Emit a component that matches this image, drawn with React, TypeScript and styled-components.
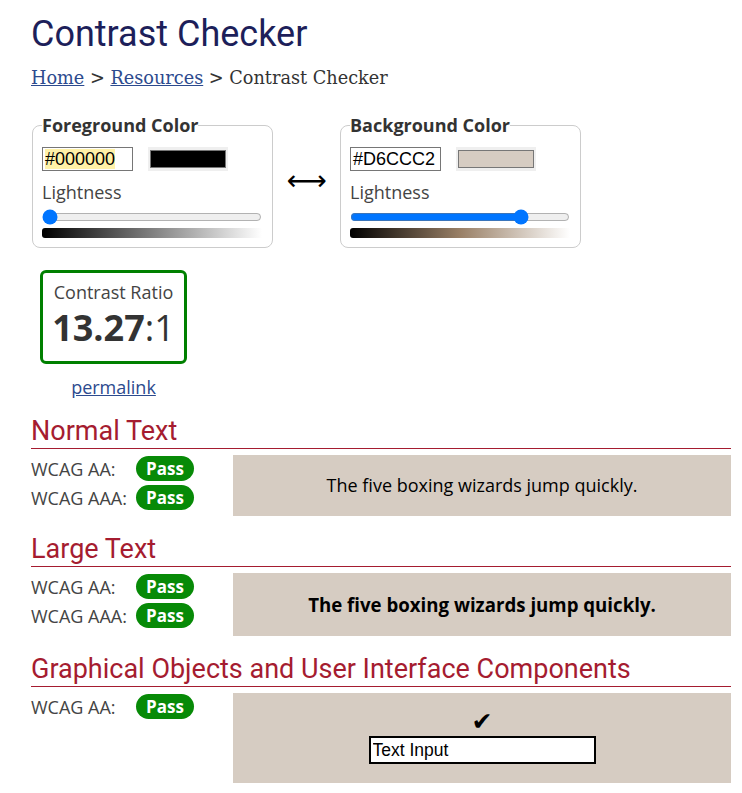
import React from "react";
import styled, { createGlobalStyle } from "styled-components";

const Global = createGlobalStyle`
  html, body { margin: 0; padding: 0; background: #fff; }
  body { font-family: "Open Sans", sans-serif; color: #333; }
  * { box-sizing: border-box; }
`;

const Page = styled.main`
  width: 742px;
  padding: 14px 11px 0 31px;
`;

const Title = styled.h1`
  margin: 0;
  font-family: Roboto, sans-serif;
  font-weight: 400;
  font-size: 36px;
  line-height: 40px;
  color: #1d1f5a;
`;

const Crumbs = styled.nav`
  margin-top: 12px;
  font-family: "DejaVu Serif", serif;
  font-size: 17.7px;
  line-height: 24px;
  color: #333;
  a { color: #2c4a8e; text-decoration: underline; }
`;

const ColorRow = styled.div`
  display: flex;
  align-items: center;
  margin-top: 24px;
  padding-left: 1px;
`;

const Fieldset = styled.fieldset`
  width: 241px;
  margin: 0;
  min-width: 0;
  border: 1px solid #ccc;
  border-radius: 8px;
  padding: 11px 10px 9px 9px;
`;

const Legend = styled.legend`
  padding: 0;
  font-weight: 700;
  font-size: 18px;
  line-height: 22px;
  color: #333;
`;

const InputRow = styled.div`
  display: flex;
  align-items: center;
  gap: 15px;
`;

const HexField = styled.div`
  width: 91px;
  height: 24px;
  border: 1px solid #767676;
  padding: 0 2px;
  font-family: "Liberation Sans", Arial, sans-serif;
  font-size: 18px;
  line-height: 22px;
  color: #000;
  background: #fff;
`;

const Mark = styled.span<{ $on: boolean }>`
  background: ${(p) => (p.$on ? "#fff2a8" : "transparent")};
`;

const Swatch = styled.div`
  width: 80px;
  height: 24px;
  padding: 3px 2px;
  background: #efefef;
`;

const SwatchFill = styled.div<{ $c: string }>`
  width: 100%;
  height: 100%;
  border: 1px solid #777;
  background: ${(p) => p.$c};
`;

const Label = styled.div`
  margin-top: 9px;
  font-size: 18px;
  line-height: 24px;
  color: #444;
`;

const Range = styled.input`
  display: block;
  width: 100%;
  height: 16px;
  margin: 5px 0 0;
`;

const GradientBar = styled.div<{ $g: string }>`
  height: 10px;
  margin-top: 3px;
  border-radius: 3px 0 0 3px;
  background: ${(p) => p.$g};
`;

const Swap = styled.div`
  width: 67px;
  text-align: center;
  font-family: "DejaVu Sans", sans-serif;
  font-size: 28px;
  line-height: 30px;
  color: #000;
`;

const RatioWrap = styled.div`
  width: 147px;
  margin: 22px 0 0 9px;
  display: flex;
  flex-direction: column;
  align-items: center;
`;

const RatioBox = styled.div`
  width: 147px;
  height: 94px;
  border: 3px solid #008000;
  border-radius: 6px;
  padding-top: 8px;
  display: flex;
  flex-direction: column;
  align-items: center;
`;

const RatioLabel = styled.div`
  font-size: 18px;
  line-height: 23px;
  color: #444;
`;

const RatioValue = styled.div`
  margin-top: 2px;
  font-size: 36px;
  line-height: 44px;
  color: #333;
  b { font-weight: 700; }
`;

const Permalink = styled.a`
  margin-top: 11px;
  font-size: 18px;
  line-height: 24px;
  color: #2c4a8e;
  text-decoration: underline;
`;

const Section = styled.section<{ $first?: boolean }>`
  margin-top: ${(p) => (p.$first ? "17px" : "18px")};
`;

const SectionTitle = styled.h2`
  margin: 0;
  padding-bottom: 2px;
  border-bottom: 1px solid #a51c30;
  font-family: Roboto, sans-serif;
  font-weight: 400;
  font-size: 27px;
  line-height: 30px;
  color: #a51c30;
`;

const SectionBody = styled.div`
  display: grid;
  grid-template-columns: 202px 1fr;
  margin-top: 6px;
`;

const Results = styled.div`
  display: flex;
  flex-direction: column;
  gap: 4px;
  padding-top: 1px;
`;

const ResultRow = styled.div`
  display: flex;
  align-items: center;
  height: 25px;
`;

const Level = styled.span`
  width: 105px;
  font-size: 18px;
  color: #444;
`;

const Badge = styled.span`
  height: 25px;
  padding: 0 10px;
  border-radius: 13px;
  background: #078a07;
  color: #fff;
  font-weight: 700;
  font-size: 17px;
  line-height: 25px;
`;

const Sample = styled.div<{ $large?: boolean }>`
  background: #d6ccc2;
  padding: 19px;
  text-align: center;
  color: #000;
  font-size: ${(p) => (p.$large ? "18.67px" : "18px")};
  font-weight: ${(p) => (p.$large ? 700 : 400)};
  line-height: ${(p) => (p.$large ? "25px" : "23px")};
`;

const UiSample = styled.div`
  background: #d6ccc2;
  padding: 12px 0 19px;
  display: flex;
  flex-direction: column;
  align-items: center;
`;

const Check = styled.div`
  font-family: "DejaVu Sans", sans-serif;
  font-size: 25px;
  line-height: 30px;
  color: #000;
  margin-bottom: 1px;
  padding-top: 2px;
  height: 30px;
`;

const DemoInput = styled.input`
  width: 227px;
  height: 28px;
  border: 2px solid #000;
  background: #fff;
  padding: 0 2px;
  font-family: "Liberation Sans", Arial, sans-serif;
  font-size: 17.5px;
  color: #000;
  outline: none;
`;

type ColorInfo = { legend: string; hex: string; lightness: number; gradient: string; mark: boolean };

const colors: ColorInfo[] = [
  {
    legend: "Foreground Color",
    hex: "#000000",
    lightness: 0,
    gradient: "linear-gradient(to right, #000, #fff)",
    mark: true,
  },
  {
    legend: "Background Color",
    hex: "#D6CCC2",
    lightness: 80,
    gradient:
      "linear-gradient(to right, hsl(30,20%,0%), hsl(30,20%,25%), hsl(30,20%,50%), hsl(30,20%,75%), hsl(30,20%,100%))",
    mark: false,
  },
];

function ColorBox({ c }: { c: ColorInfo }) {
  return (
    <Fieldset>
      <Legend>{c.legend}</Legend>
      <InputRow>
        <HexField>
          <Mark $on={c.mark}>{c.hex}</Mark>
        </HexField>
        <Swatch>
          <SwatchFill $c={c.hex} />
        </Swatch>
      </InputRow>
      <Label>Lightness</Label>
      <Range type="range" min={0} max={100} defaultValue={c.lightness} aria-label="Lightness" />
      <GradientBar $g={c.gradient} />
    </Fieldset>
  );
}

function Rows({ levels }: { levels: string[] }) {
  return (
    <Results>
      {levels.map((l) => (
        <ResultRow key={l}>
          <Level>{l}</Level>
          <Badge>Pass</Badge>
        </ResultRow>
      ))}
    </Results>
  );
}

export default function App() {
  return (
    <>
      <Global />
      <Page>
        <Title>Contrast Checker</Title>
        <Crumbs>
          <a href="#">Home</a> &gt; <a href="#">Resources</a> &gt; Contrast Checker
        </Crumbs>
        <ColorRow>
          <ColorBox c={colors[0]} />
          <Swap>⟷</Swap>
          <ColorBox c={colors[1]} />
        </ColorRow>
        <RatioWrap>
          <RatioBox>
            <RatioLabel>Contrast Ratio</RatioLabel>
            <RatioValue>
              <b>13.27</b>:1
            </RatioValue>
          </RatioBox>
          <Permalink href="#">permalink</Permalink>
        </RatioWrap>

        <Section $first>
          <SectionTitle>Normal Text</SectionTitle>
          <SectionBody>
            <Rows levels={["WCAG AA:", "WCAG AAA:"]} />
            <Sample>The five boxing wizards jump quickly.</Sample>
          </SectionBody>
        </Section>

        <Section>
          <SectionTitle>Large Text</SectionTitle>
          <SectionBody>
            <Rows levels={["WCAG AA:", "WCAG AAA:"]} />
            <Sample $large>The five boxing wizards jump quickly.</Sample>
          </SectionBody>
        </Section>

        <Section>
          <SectionTitle>Graphical Objects and User Interface Components</SectionTitle>
          <SectionBody>
            <Rows levels={["WCAG AA:"]} />
            <UiSample>
              <Check>✔</Check>
              <DemoInput readOnly defaultValue="Text Input" />
            </UiSample>
          </SectionBody>
        </Section>
      </Page>
    </>
  );
}
